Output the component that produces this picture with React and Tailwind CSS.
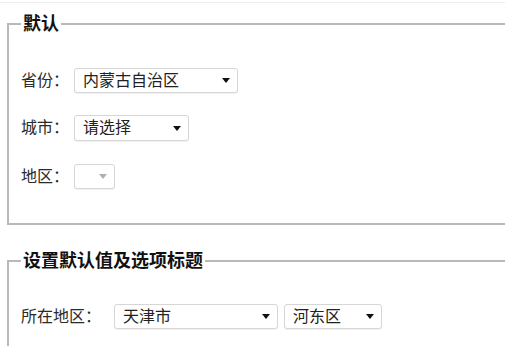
import React from "react";

const Arrow = ({ disabled }) => (
    <svg width="8" height="5" viewBox="0 0 8 5" className="shrink-0">
        <path d="M0 0 L8 0 L4 5 Z" fill={disabled ? "#b0b0b0" : "#111"} />
    </svg>
);

const Select = ({ value, width, disabled }) => (
    <div
        className={`flex items-center justify-between h-[25px] pl-2 pr-[7px] rounded-[3px] border border-[#d6d6d6] bg-white shadow-[0_1px_1px_rgba(0,0,0,0.06)] ${width}`}
    >
        <span className="leading-none text-[16px] text-[#222]">{value}</span>
        <Arrow disabled={disabled} />
    </div>
);

const Row = ({ label, children, className }) => (
    <div className={`flex items-center ${className}`}>
        <span className="text-[16px] leading-none text-[#2a2a2a]">{label}</span>
        {children}
    </div>
);

export default function App() {
    return (
        <div
            className="w-[505px] h-[346px] overflow-hidden bg-white"
            style={{ fontFamily: '"Liberation Sans", "Noto Sans CJK SC", sans-serif' }}
        >
            <div className="h-[3px] border-b border-[#ececec]" />

            <fieldset className="ml-[7px] mt-[10px] w-[520px] border-2 border-[#b9b9b9] px-3 pb-[34px]">
                <legend className="px-[2px] text-[18px] font-bold leading-[22px] text-[#111]">默认</legend>
                <Row label="省份：" className="mt-[33px]">
                    <Select value="内蒙古自治区" width="w-[164px] ml-[5px]" />
                </Row>
                <Row label="城市：" className="mt-[22px]">
                    <Select value="请选择" width="w-[115px] ml-[5px] h-[26px]" />
                </Row>
                <Row label="地区：" className="mt-[23px]">
                    <Select value="" width="w-[41px] ml-[5px]" disabled />
                </Row>
            </fieldset>

            <fieldset className="ml-[7px] mt-[25px] w-[520px] border-2 border-[#b9b9b9] px-3 pb-8">
                <legend className="px-[2px] text-[18px] font-bold leading-[22px] text-[#111]">设置默认值及选项标题</legend>
                <Row label="所在地区：" className="mt-[32px]">
                    <Select value="天津市" width="w-[164px] ml-[13px]" />
                    <Select value="河东区" width="w-[98px] ml-[6px]" />
                </Row>
            </fieldset>
        </div>
    );
}
